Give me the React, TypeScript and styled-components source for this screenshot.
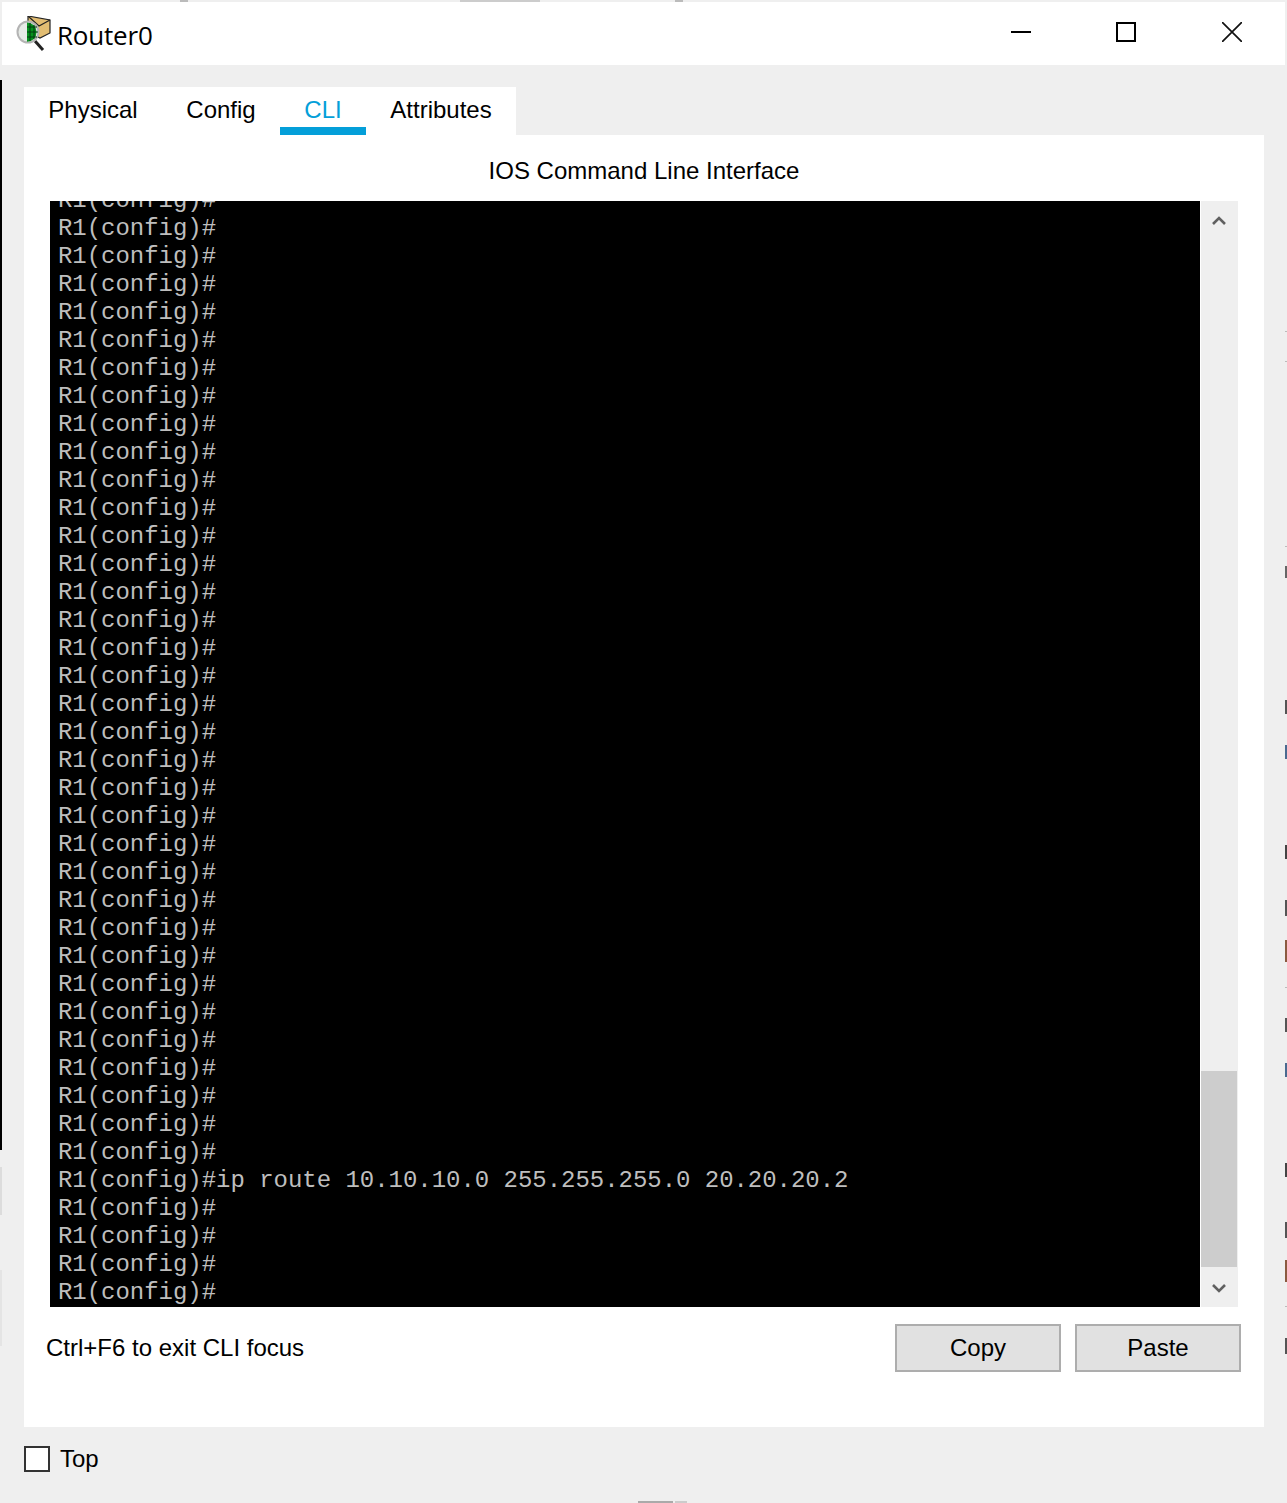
import React from "react";
import styled, { createGlobalStyle } from "styled-components";

const Global = createGlobalStyle`
  html, body { margin: 0; padding: 0; background: #efefef; }
  * { box-sizing: border-box; }
`;
const Sans = `"Liberation Sans", Arial, sans-serif`;

const Window = styled.div`
  position: relative;
  width: 1287px;
  height: 1503px;
  overflow: hidden;
  background: #efefef;
  font-family: ${Sans};
  color: #000;
  padding-top: 2px;
`;
const TitleBar = styled.header`
  height: 63px;
  margin: 0 2px;
  background: #fff;
  display: flex;
  align-items: center;
`;
const AppIcon = styled.svg`
  width: 36px;
  height: 36px;
  margin-left: 14px;
  flex: none;
`;
const Title = styled.h1`
  margin: 0 0 0 5px;
  font: 400 26px "Open Sans", "Noto Sans", sans-serif;
  letter-spacing: -0.2px;
  position: relative;
  top: 1px;
  flex: 1;
`;
const Controls = styled.div`
  display: flex;
  align-items: center;
  height: 100%;
  position: relative;
  top: -2px;
`;
const Control = styled.button`
  width: 106px;
  height: 100%;
  padding: 0;
  border: 0;
  background: none;
  display: flex;
  align-items: center;
  justify-content: center;
`;
const Body = styled.main`
  padding: 22px 23px 0 24px;
`;
const Tabs = styled.nav`
  display: flex;
  width: 492px;
  height: 48px;
  background: #fff;
`;
const Tab = styled.div<{ $w: number; $active?: boolean }>`
  width: ${(p) => p.$w}px;
  height: 48px;
  padding-top: 9px;
  text-align: center;
  font-size: 24px;
  line-height: 28px;
  color: ${(p) => (p.$active ? "#049fd9" : "#000")};
  border-bottom: ${(p) => (p.$active ? "8px solid #049fd9" : "0")};
`;
const Panel = styled.section`
  width: 1240px;
  height: 1292px;
  background: #fff;
  padding: 0 26px;
`;
const Heading = styled.div`
  height: 66px;
  padding-top: 22px;
  text-align: center;
  font-size: 24px;
  line-height: 28px;
`;
const Cli = styled.div`
  display: flex;
  height: 1106px;
  width: 1188px;
`;
const Terminal = styled.div`
  width: 1150px;
  height: 100%;
  background: #000;
  color: #bebebe;
  overflow: hidden;
  display: flex;
  flex-direction: column;
  justify-content: flex-end;
  padding: 0 0 0 8px;
  font-family: "Liberation Mono", "Courier New", monospace;
  font-size: 24px;
  line-height: 28px;
  letter-spacing: -0.03px;
  white-space: pre;
`;
const Line = styled.div`
  flex: none;
  height: 28px;
`;
const Scrollbar = styled.div`
  margin-left: 1px;
  width: 37px;
  height: 100%;
  background: #efefef;
  display: flex;
  flex-direction: column;
  align-items: center;
`;
const ScrollButton = styled.svg<{ $top: number; $bottom: number }>`
  width: 14px;
  height: 10px;
  flex: none;
  margin: ${(p) => p.$top}px 0 ${(p) => p.$bottom}px -2px;
`;
const ScrollTrack = styled.div`
  flex: 1;
  width: 100%;
  display: flex;
  flex-direction: column;
  justify-content: flex-end;
  margin-top: 15px;
  padding-right: 1px;
`;
const Thumb = styled.div`
  height: 196px;
  background: #cdcdcd;
`;
const BottomRow = styled.div`
  display: flex;
  align-items: flex-start;
  margin-top: 17px;
  width: 1195px;
  margin-left: -4px;
`;
const Hint = styled.div`
  flex: 1;
  font-size: 24px;
  line-height: 48px;
`;
const ActionButton = styled.button`
  width: 166px;
  height: 48px;
  margin-left: 14px;
  background: #e1e1e1;
  border: 2px solid #adadad;
  font: 400 24px ${Sans};
  color: #000;
  padding: 0;
`;
const TopRow = styled.label`
  display: flex;
  align-items: center;
  height: 64px;
  font-size: 24px;
`;
const Check = styled.span`
  width: 26px;
  height: 26px;
  background: #fff;
  border: 2px solid #333;
  margin-right: 10px;
`;
const Edge = styled.div<{ $x: number; $y: number; $w: number; $h: number; $c: string }>`
  position: absolute;
  left: ${(p) => p.$x}px;
  top: ${(p) => p.$y}px;
  width: ${(p) => p.$w}px;
  height: ${(p) => p.$h}px;
  background: ${(p) => p.$c};
`;

const edges = [
  { x: 0, y: 80, w: 2, h: 1070, c: "#000" },
  { x: 0, y: 1167, w: 2, h: 48, c: "#dcdcdc" },
  { x: 0, y: 1270, w: 2, h: 76, c: "#e4e4e4" },
  { x: 180, y: 0, w: 8, h: 2, c: "#bbb" },
  { x: 460, y: 0, w: 80, h: 2, c: "#ccc" },
  { x: 675, y: 0, w: 8, h: 2, c: "#bbb" },
  { x: 638, y: 1501, w: 35, h: 2, c: "#aaa" },
  { x: 675, y: 1501, w: 12, h: 2, c: "#ccc" },
  { x: 1285, y: 331, w: 2, h: 1, c: "#bbb" },
  { x: 1285, y: 361, w: 2, h: 1, c: "#bbb" },
  { x: 1285, y: 546, w: 2, h: 1, c: "#bbb" },
  { x: 1285, y: 566, w: 2, h: 12, c: "#666" },
  { x: 1285, y: 700, w: 2, h: 14, c: "#555" },
  { x: 1285, y: 745, w: 2, h: 14, c: "#4a6a90" },
  { x: 1285, y: 845, w: 2, h: 14, c: "#444" },
  { x: 1285, y: 900, w: 2, h: 16, c: "#555" },
  { x: 1285, y: 940, w: 2, h: 22, c: "#8a5a40" },
  { x: 1285, y: 987, w: 2, h: 1, c: "#bbb" },
  { x: 1285, y: 1018, w: 2, h: 14, c: "#555" },
  { x: 1285, y: 1063, w: 2, h: 14, c: "#4a6a90" },
  { x: 1285, y: 1163, w: 2, h: 14, c: "#444" },
  { x: 1285, y: 1222, w: 2, h: 16, c: "#555" },
  { x: 1285, y: 1260, w: 2, h: 22, c: "#8a5a40" },
  { x: 1285, y: 1306, w: 2, h: 1, c: "#bbb" },
  { x: 1285, y: 1338, w: 2, h: 16, c: "#555" },
];

const lines = Array.from({ length: 40 }, (_, i) =>
  i === 35 ? "R1(config)#ip route 10.10.10.0 255.255.255.0 20.20.20.2" : "R1(config)#"
);

export default function App() {
  return (
    <Window>
      <Global />
      {edges.map((e, i) => (
        <Edge key={i} $x={e.x} $y={e.y} $w={e.w} $h={e.h} $c={e.c} />
      ))}
      <TitleBar>
        <AppIcon viewBox="0 0 36 36">
          <path d="M12 0l22 4v13l-10 5-12-6z" fill="#e2bd72" stroke="#222" strokeWidth="1.2" />
          <path d="M12 0l11 10 11-6" fill="none" stroke="#222" strokeWidth="1.2" />
          <path d="M19 25l8 9" stroke="#222" strokeWidth="3" />
          <circle cx="12" cy="16" r="10.5" fill="#e6eae6" stroke="#b4b4b4" strokeWidth="2" />
          <path d="M11 6.5a9.6 9.6 0 0 1 0 19.2z" fill="#07921e" />
          <path d="M14 7v18M18 9v14M11 11h10M11 16h11M11 21h10" stroke="#033d10" strokeWidth="1" />
        </AppIcon>
        <Title>Router0</Title>
        <Controls>
          <Control aria-label="Minimize">
            <svg width="20" height="20" viewBox="0 0 20 20" style={{ marginLeft: 2 }}><path d="M0 10h20" stroke="#000" strokeWidth="2" /></svg>
          </Control>
          <Control aria-label="Maximize">
            <svg width="20" height="20" viewBox="0 0 20 20"><rect x="1" y="1" width="18" height="18" fill="none" stroke="#000" strokeWidth="2" /></svg>
          </Control>
          <Control aria-label="Close">
            <svg width="20" height="20" viewBox="0 0 20 20"><path d="M0 0l20 20M20 0L0 20" stroke="#111" strokeWidth="1.7" /></svg>
          </Control>
        </Controls>
      </TitleBar>
      <Body>
        <Tabs>
          <Tab $w={138}>Physical</Tab>
          <Tab $w={118}>Config</Tab>
          <Tab $w={86} $active>CLI</Tab>
          <Tab $w={150}>Attributes</Tab>
        </Tabs>
        <Panel>
          <Heading>IOS Command Line Interface</Heading>
          <Cli>
            <Terminal>
              {lines.map((l, i) => (
                <Line key={i}>{l}</Line>
              ))}
            </Terminal>
            <Scrollbar>
              <ScrollButton viewBox="0 0 14 10" $top={15} $bottom={0}>
                <path d="M1 8l6-6 6 6" fill="none" stroke="#606060" strokeWidth="2.6" />
              </ScrollButton>
              <ScrollTrack>
                <Thumb />
              </ScrollTrack>
              <ScrollButton viewBox="0 0 14 10" $top={16} $bottom={14}>
                <path d="M1 2l6 6 6-6" fill="none" stroke="#606060" strokeWidth="2.6" />
              </ScrollButton>
            </Scrollbar>
          </Cli>
          <BottomRow>
            <Hint>Ctrl+F6 to exit CLI focus</Hint>
            <ActionButton>Copy</ActionButton>
            <ActionButton>Paste</ActionButton>
          </BottomRow>
        </Panel>
        <TopRow>
          <Check />
          Top
        </TopRow>
      </Body>
    </Window>
  );
}
